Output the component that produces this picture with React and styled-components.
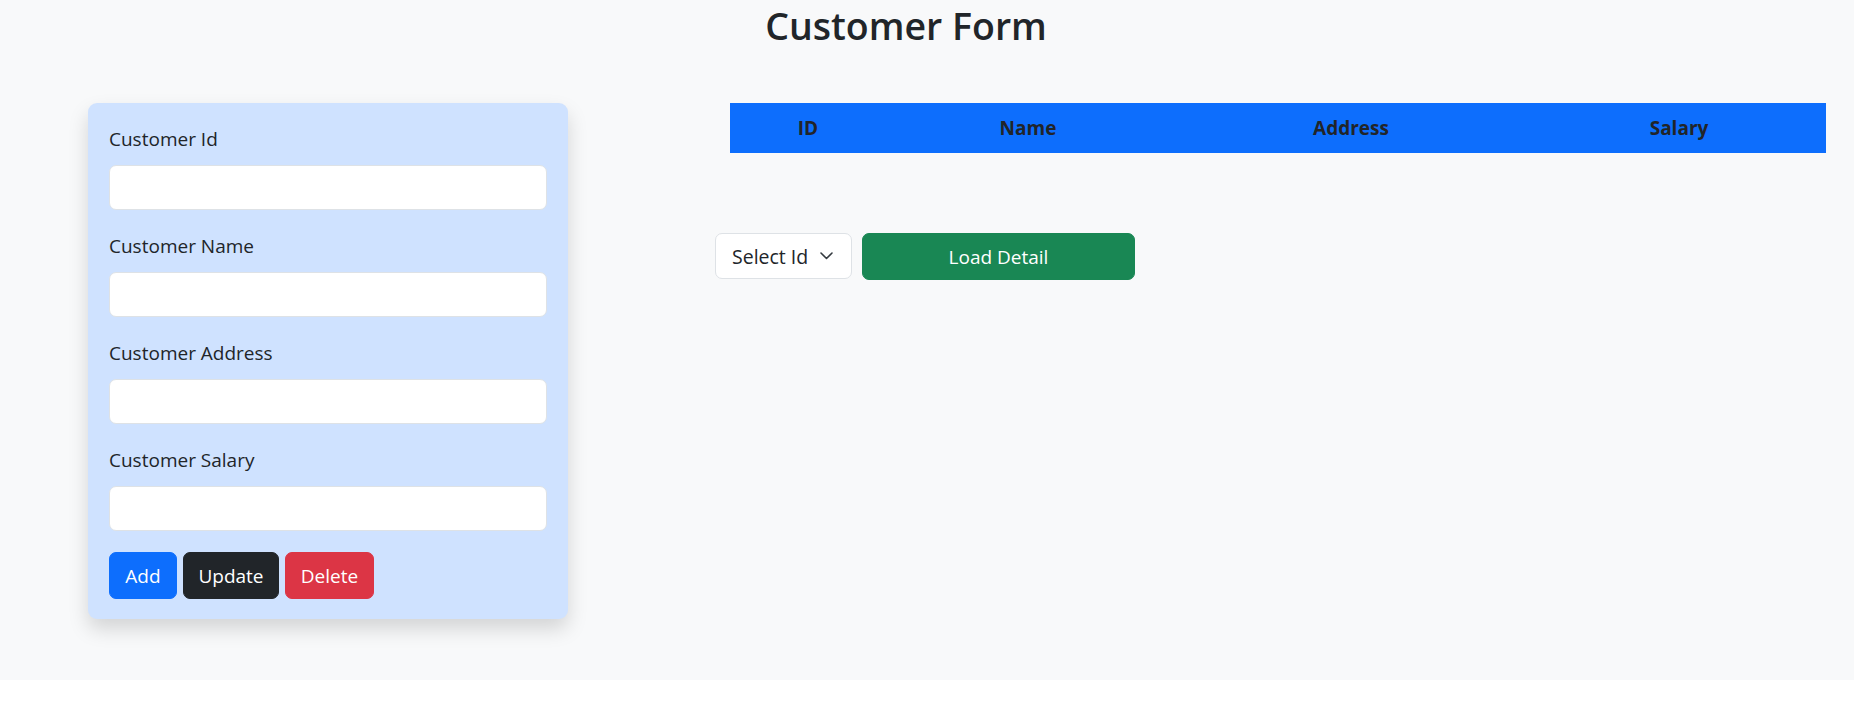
import React, { useState } from "react";
import styled, { createGlobalStyle } from "styled-components";

const GlobalStyle = createGlobalStyle`
  * {
    box-sizing: border-box;
  }
  body {
    margin: 0;
    background: #ffffff;
    font-family: "Open Sans", "Noto Sans", Arial, sans-serif;
    color: #212529;
  }
`;

const Page = styled.div`
  background-color: #f8f9fa;
  min-height: 680px;
`;

const Title = styled.h2`
  margin: 0;
  padding-right: 42px;
  height: 103px;
  line-height: 52px;
  font-size: 37.5px;
  font-weight: 600;
  text-align: center;
  color: #212529;
`;

const Row = styled.div`
  display: flex;
  align-items: flex-start;
`;

const Card = styled.div`
  width: 480px;
  margin-left: 88px;
  padding: 21px 21px 20px;
  background-color: #cfe2ff;
  border-radius: 9px;
  box-shadow: 0 10px 20px rgba(0, 0, 0, 0.15);
`;

const Group = styled.div`
  margin-bottom: 21px;
`;

const Label = styled.label`
  display: block;
  margin-bottom: 11px;
  font-size: 19px;
  line-height: 30px;
  color: #212529;
`;

const Input = styled.input`
  display: block;
  width: 100%;
  height: 45px;
  padding: 0 14px;
  font-family: inherit;
  font-size: 19px;
  background: #ffffff;
  border: 1px solid #dee2e6;
  border-radius: 7px;
  outline: none;
`;

const ButtonRow = styled.div`
  display: flex;
  gap: 6px;
`;

const colors = {
  primary: "#0d6efd",
  dark: "#212529",
  danger: "#dc3545",
  success: "#198754",
};

const Button = styled.button`
  height: 47px;
  padding: 0 14px;
  font-family: inherit;
  font-size: 19px;
  color: #ffffff;
  background-color: ${(p) => colors[p.$variant]};
  border: 1px solid ${(p) => colors[p.$variant]};
  border-radius: 7px;
  cursor: pointer;
  width: ${(p) => (p.$width ? p.$width + "px" : "auto")};
`;

const Right = styled.div`
  flex: 1;
  margin-left: 147px;
  margin-right: 28px;
`;

const Table = styled.table`
  width: calc(100% - 15px);
  margin-left: 15px;
  border-collapse: collapse;
`;

const HeadCell = styled.th`
  width: ${(p) => p.$width}px;
  height: 50px;
  padding: 0;
  background-color: #0d6efd;
  color: #212529;
  font-size: 19px;
  font-weight: 700;
  text-align: center;
`;

const Controls = styled.div`
  display: flex;
  gap: 10px;
  margin-top: 80px;
`;

const SelectWrap = styled.div`
  position: relative;
  width: 137px;
  height: 46px;
`;

const Select = styled.select`
  appearance: none;
  width: 100%;
  height: 100%;
  padding: 0 34px 0 16px;
  font-family: inherit;
  font-size: 19.5px;
  color: #212529;
  background: #ffffff;
  border: 1px solid #dee2e6;
  border-radius: 7px;
  outline: none;
`;

const Chevron = styled.svg`
  position: absolute;
  right: 19px;
  top: 19px;
  pointer-events: none;
`;

const fields = [
  { key: "id", label: "Customer Id" },
  { key: "name", label: "Customer Name" },
  { key: "address", label: "Customer Address" },
  { key: "salary", label: "Customer Salary" },
];

const columns = [
  { name: "ID", width: 156 },
  { name: "Name", width: 284 },
  { name: "Address", width: 362 },
  { name: "Salary", width: 294 },
];

function App() {
  const [customer, setCustomer] = useState({
    id: "",
    name: "",
    address: "",
    salary: "",
  });

  const handleInputValue = (key) => (e) => {
    setCustomer({ ...customer, [key]: e.target.value });
  };

  return (
    <Page>
      <GlobalStyle />
      <Title>Customer Form</Title>
      <Row>
        <Card>
          {fields.map((f) => (
            <Group key={f.key}>
              <Label htmlFor={f.key}>{f.label}</Label>
              <Input
                id={f.key}
                value={customer[f.key]}
                onChange={handleInputValue(f.key)}
              />
            </Group>
          ))}
          <ButtonRow>
            <Button $variant="primary" $width={68}>
              Add
            </Button>
            <Button $variant="dark" $width={96}>
              Update
            </Button>
            <Button $variant="danger" $width={89}>
              Delete
            </Button>
          </ButtonRow>
        </Card>

        <Right>
          <Table>
            <thead>
              <tr>
                {columns.map((c) => (
                  <HeadCell key={c.name} $width={c.width}>
                    {c.name}
                  </HeadCell>
                ))}
              </tr>
            </thead>
            <tbody></tbody>
          </Table>
          <Controls>
            <SelectWrap>
              <Select defaultValue="">
                <option value="">Select Id</option>
              </Select>
              <Chevron width="13" height="8" viewBox="0 0 13 8">
                <path
                  d="M1 1l5.5 5.5L12 1"
                  fill="none"
                  stroke="#343a40"
                  strokeWidth="1.6"
                  strokeLinecap="round"
                  strokeLinejoin="round"
                />
              </Chevron>
            </SelectWrap>
            <Button $variant="success" $width={273}>
              Load Detail
            </Button>
          </Controls>
        </Right>
      </Row>
    </Page>
  );
}

export default App;
